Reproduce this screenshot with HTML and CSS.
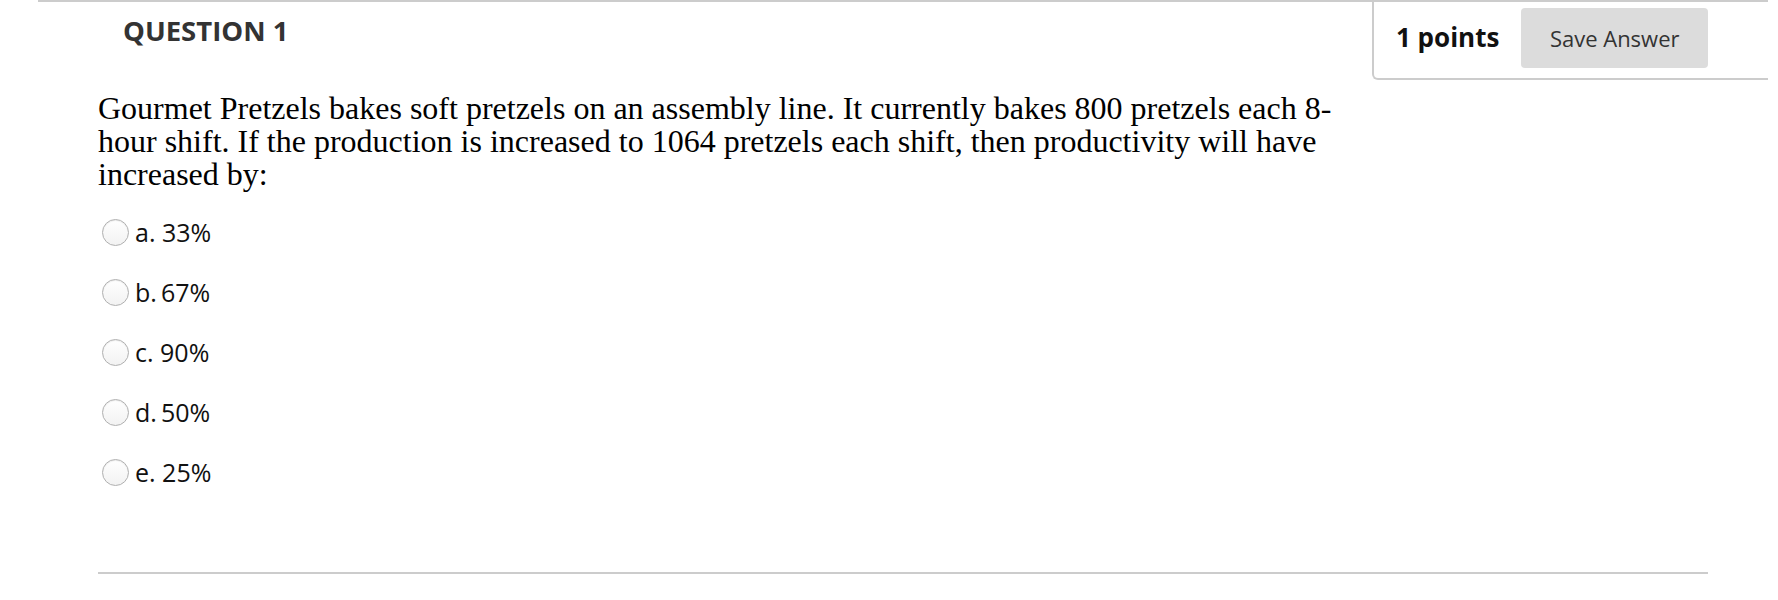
FILE: index.html
```html
<!DOCTYPE html>
<html lang="en">
<head>
<meta charset="utf-8">
<title>Question 1</title>
<link rel="stylesheet" href="styles.css">
</head>
<body>
<div class="page">
  <div class="header">
    <h2 class="qtitle">QUESTION 1</h2>
    <div class="points-box">
      <span class="points">1 points</span>
      <button class="save-btn" type="button">Save Answer</button>
    </div>
  </div>
  <div class="qbody">
    <p class="qtext">Gourmet Pretzels bakes soft pretzels on an assembly line. It currently bakes 800 pretzels each 8-hour shift. If the production is increased to 1064 pretzels each shift, then productivity will have increased by:</p>
    <ul class="options">
      <li class="option"><span class="radio"></span><span class="label">a. 33%</span></li>
      <li class="option"><span class="radio"></span><span class="label">b.&#8201;67%</span></li>
      <li class="option"><span class="radio"></span><span class="label">c. 90%</span></li>
      <li class="option"><span class="radio"></span><span class="label">d.&#8201;50%</span></li>
      <li class="option"><span class="radio"></span><span class="label">e. 25%</span></li>
    </ul>
  </div>
</div>
</body>
</html>
```

FILE: styles.css
```css
html, body {
  margin: 0;
  padding: 0;
  background: #ffffff;
}

body {
  font-family: "Open Sans", "Liberation Sans", sans-serif;
  color: #111;
}

.page {
  margin-left: 38px;
  width: 1730px;
  border-top: 2px solid #cccccc;
}

.header {
  display: flex;
  justify-content: space-between;
  align-items: flex-start;
}

.qtitle {
  margin: 0;
  padding: 12px 0 0 85px;
  font-size: 27.5px;
  line-height: 34px;
  font-weight: 700;
  color: #333333;
}

.points-box {
  box-sizing: border-box;
  width: 396px;
  height: 78px;
  display: flex;
  align-items: center;
  gap: 22px;
  padding: 6px 60px 10px 22px;
  border-left: 2px solid #cccccc;
  border-bottom: 2px solid #cccccc;
  border-bottom-left-radius: 6px;
}

.points {
  margin-bottom: 3px;
  font-size: 26px;
  font-weight: 700;
  color: #111111;
  white-space: nowrap;
}

.save-btn {
  flex: 1;
  height: 60px;
  padding: 0;
  border: none;
  border-radius: 4px;
  background: #dcdcdc;
  font-family: "Open Sans", "Liberation Sans", sans-serif;
  font-size: 22px;
  color: #333333;
}

.qbody {
  margin: 0 60px;
  padding-bottom: 70px;
  border-bottom: 2px solid #cccccc;
}

.qtext {
  margin: 12px 0 0 0;
  width: 1268px;
  font-family: "Liberation Serif", "Times New Roman", serif;
  font-size: 32px;
  line-height: 33px;
  color: #000000;
}

.options {
  list-style: none;
  margin: 11px 0 0 0;
  padding: 0;
}

.option {
  display: flex;
  align-items: center;
  height: 60px;
}

.radio {
  box-sizing: border-box;
  width: 27px;
  height: 27px;
  margin-left: 4px;
  border-radius: 50%;
  border: 1px solid #b0b0b0;
  background: linear-gradient(#ffffff, #f2f2f2);
  box-shadow: inset 0 1px 1px rgba(0, 0, 0, 0.08);
}

.label {
  margin-left: 6px;
  font-size: 25px;
  line-height: 34px;
  color: #111111;
}
```
